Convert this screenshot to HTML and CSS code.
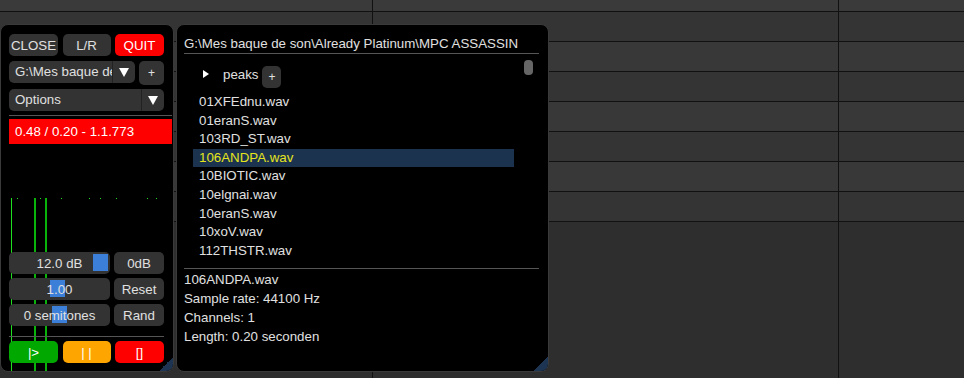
FILE: index.html
```html
<!DOCTYPE html>
<html lang="en">
<head>
    <meta charset="UTF-8">
    <title>Sampler</title>
    <link rel="stylesheet" href="styles.css">
</head>
<body>
    <div class="arrange">
        <div class="ruler"><div></div><div></div><div></div></div>
        <div class="track"><div></div><div></div><div></div></div>
        <div class="track alt"><div></div><div></div><div></div></div>
        <div class="track"><div></div><div></div><div></div></div>
        <div class="track alt"><div></div><div></div><div></div></div>
        <div class="track"><div></div><div></div><div></div></div>
        <div class="track alt"><div></div><div></div><div></div></div>
        <div class="track"><div></div><div></div><div></div></div>
        <div class="filler"><div></div><div></div><div></div></div>
    </div>

    <!-- plugin window -->
    <div class="plugin">
        <svg class="wave" width="172" height="175" viewBox="0 0 172 175">
            <rect x="10" y="0" width="1" height="175" fill="#1ee01e"/>
            <rect x="33" y="0" width="2" height="175" fill="#09b309"/>
            <rect x="44" y="0" width="2" height="175" fill="#09b309"/>
            <rect x="16" y="0" width="1" height="1" fill="#1ee01e"/>
            <rect x="39" y="0" width="1" height="1" fill="#1ee01e"/>
            <rect x="60" y="0" width="1" height="1" fill="#1ee01e"/>
            <rect x="88" y="0" width="1" height="1" fill="#1ee01e"/>
            <rect x="99" y="0" width="1" height="1" fill="#1ee01e"/>
            <rect x="115" y="0" width="1" height="1" fill="#1ee01e"/>
            <rect x="146" y="0" width="1" height="1" fill="#1ee01e"/>
            <rect x="155" y="0" width="1" height="1" fill="#1ee01e"/>
        </svg>

        <div class="btn-row">
            <div class="btn">CLOSE</div>
            <div class="btn mid">L/R</div>
            <div class="btn red">QUIT</div>
        </div>
        <div class="btn-row folder-row">
            <div class="select">
                <span class="select-label">G:\Mes baque de</span>
                <span class="select-arrow"><i class="down"></i></span>
            </div>
            <div class="btn add">+</div>
        </div>
        <div class="btn-row options-row">
            <div class="select wide">
                <span class="select-label">Options</span>
                <span class="select-arrow"><i class="down"></i></span>
            </div>
        </div>
        <div class="sep"></div>
        <div class="position">0.48 / 0.20 - 1.1.773</div>
        <div class="wave-space"></div>

        <div class="ctl-row">
            <div class="slider"><span class="knob" style="left: 84px"></span><span class="val">12.0 dB</span></div>
            <div class="btn side">0dB</div>
        </div>
        <div class="ctl-row">
            <div class="slider"><span class="knob" style="left: 41px"></span><span class="val">1.00</span></div>
            <div class="btn side">Reset</div>
        </div>
        <div class="ctl-row">
            <div class="slider"><span class="knob" style="left: 43px"></span><span class="val">0 semitones</span></div>
            <div class="btn side">Rand</div>
        </div>
        <div class="sep short"></div>
        <div class="btn-row transport">
            <div class="btn green">|&gt;</div>
            <div class="btn mid orange">| |</div>
            <div class="btn red">[]</div>
        </div>
        <div class="grip"></div>
    </div>

    <!-- file browser window -->
    <div class="browser">
        <div class="path">G:\Mes baque de son\Already Platinum\MPC ASSASSIN</div>
        <div class="rule"></div>
        <div class="tree">
            <i class="right"></i>
            <span class="folder">peaks</span>
            <div class="btn tiny">+</div>
        </div>
        <div class="files" id="files"></div>
        <div class="rule info-rule"></div>
        <div class="info">
            <div>106ANDPA.wav</div>
            <div>Sample rate: 44100 Hz</div>
            <div>Channels: 1</div>
            <div>Length: 0.20 seconden</div>
        </div>
        <div class="thumb"></div>
        <div class="grip"></div>
    </div>

    <script>
        // fill the file list
        const files = ['01XFEdnu.wav', '01eranS.wav', '103RD_ST.wav', '106ANDPA.wav', '10BIOTIC.wav',
            '10elgnai.wav', '10eranS.wav', '10xoV.wav', '112THSTR.wav'];
        const list = document.getElementById('files');
        files.forEach(name => {
            const div = document.createElement('div');
            div.classList.add('file');
            if (name === '106ANDPA.wav') div.classList.add('selected');
            div.textContent = name;
            list.appendChild(div);
        });
    </script>
</body>
</html>
```

FILE: styles.css
```css
body {
    margin: 0;
    background-color: #2e2e2e;
    font-family: "Liberation Sans", Arial, sans-serif;
    font-size: 13.3px;
    color: #e0e0e0;
    overflow: hidden;
}
.arrange {
    display: flex;
    flex-direction: column;
    height: 378px;
}
.ruler, .track, .filler {
    display: grid;
    grid-template-columns: 372px 466px 1fr;
}
.ruler div + div, .track div + div, .filler div + div {
    border-left: 1px solid #111;
}
.ruler {
    height: 11px;
    background-color: #3a3a3a;
    border-bottom: 1px solid #111;
}
.track {
    height: 29px;
    background-color: #343434;
    border-bottom: 1px solid #111;
}
.track.alt {
    background-color: #383838;
}
.filler {
    flex: 1;
}

.plugin, .browser {
    position: absolute;
    top: 24px;
    height: 348px;
    box-sizing: border-box;
    background-color: #000;
    border: 1px solid #3a3a3a;
    border-radius: 8px;
    overflow: hidden;
}
.plugin {
    left: 0;
    width: 174px;
    padding: 9px 0 0 8px;
}
.browser {
    left: 176px;
    width: 373px;
    padding: 9px 9px 0 7px;
}
.grip {
    position: absolute;
    right: 0;
    bottom: 0;
    width: 14px;
    height: 14px;
    background: linear-gradient(135deg, transparent 50%, #1d3452 50%);
}
.wave {
    position: absolute;
    left: 0;
    top: 173px;
}

.btn-row, .ctl-row {
    position: relative;
    display: flex;
    justify-content: space-between;
    width: 155px;
    height: 22px;
}
.btn {
    display: flex;
    align-items: center;
    justify-content: center;
    width: 49px;
    background-color: #333;
    border-radius: 5px;
    color: #e0e0e0;
}
.btn.mid {
    width: 48px;
}
.btn.red {
    background-color: #ff0000;
    color: #fff;
}
.btn.green {
    background-color: #00a800;
    color: #fff;
}
.btn.orange {
    background-color: #ffa500;
    color: #fff;
}
.folder-row {
    margin-top: 5px;
    height: 24px;
    align-items: flex-start;
}
.options-row {
    margin-top: 4px;
}
.select {
    display: flex;
    width: 126px;
    height: 22px;
    background-color: #333;
    border-radius: 5px;
    overflow: hidden;
}
.select.wide {
    width: 155px;
}
.select-label {
    flex: 1;
    padding-left: 6px;
    line-height: 22px;
    white-space: nowrap;
    overflow: hidden;
}
.select-arrow {
    display: flex;
    align-items: center;
    justify-content: center;
    width: 22px;
    border-left: 1px solid #222;
}
.down {
    width: 0;
    height: 0;
    border-left: 5px solid transparent;
    border-right: 5px solid transparent;
    border-top: 9px solid #fff;
}
.btn.add {
    width: 25px;
    height: 24px;
    font-size: 12px;
}
.sep {
    margin-top: 4px;
    width: 163px;
    height: 1px;
    background-color: #555;
}
.sep.short {
    position: relative;
    margin-top: 10px;
    width: 155px;
}
.position {
    margin-top: 3px;
    width: 157px;
    height: 25px;
    padding-left: 6px;
    line-height: 25px;
    background-color: #ff0000;
    color: #fff;
}
.wave-space {
    height: 108px;
}
.ctl-row + .ctl-row {
    margin-top: 4px;
}
.slider {
    position: relative;
    width: 101px;
    background-color: #333;
    border-radius: 5px;
    display: flex;
    align-items: center;
    justify-content: center;
}
.knob {
    position: absolute;
    top: 2px;
    width: 15px;
    height: 17px;
    background-color: #3b7fd9;
}
.val {
    position: relative;
}
.btn.side {
    width: 50px;
}
.transport {
    margin-top: 4px;
}

.path {
    line-height: 19px;
    white-space: nowrap;
}
.rule {
    height: 1px;
    background-color: #555;
}
.tree {
    display: flex;
    align-items: flex-start;
    height: 22px;
    margin-top: 12px;
    padding-left: 19px;
}
.right {
    margin-top: 4px;
    width: 0;
    height: 0;
    border-top: 4px solid transparent;
    border-bottom: 4px solid transparent;
    border-left: 6px solid #fff;
}
.folder {
    margin-left: 14px;
    line-height: 18px;
}
.btn.tiny {
    margin-left: 4px;
    width: 19px;
    height: 22px;
    font-size: 12px;
}
.files {
    margin-top: 5px;
    margin-left: 9px;
    width: 321px;
}
.file {
    height: 18.6px;
    line-height: 18.6px;
    padding-left: 6px;
}
.file.selected {
    background-color: #1c3350;
    color: #e5e51c;
}
.info-rule {
    margin-top: 8px;
}
.info {
    padding-top: 1px;
}
.info div {
    line-height: 19px;
}
.thumb {
    position: absolute;
    left: 347px;
    top: 35px;
    width: 9px;
    height: 15px;
    border-radius: 4px;
    background-color: #666;
}
```
